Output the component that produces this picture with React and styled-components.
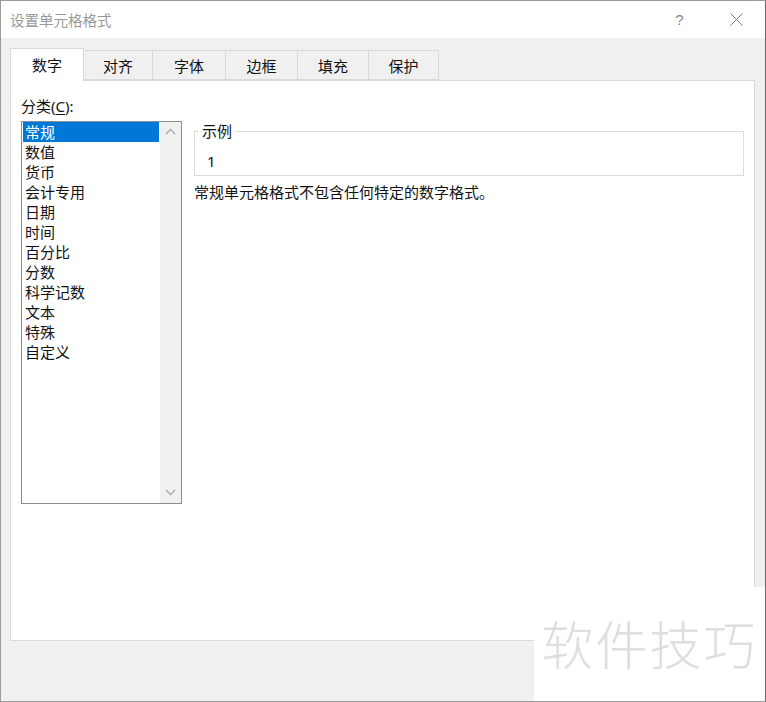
import React from 'react';
import styled, { createGlobalStyle } from 'styled-components';

const GlobalStyle = createGlobalStyle`
  html, body {
    margin: 0;
    padding: 0;
    background: #ffffff;
  }
  body {
    font-family: "Noto Sans", "Noto Sans CJK SC", sans-serif;
    color: #1a1a1a;
  }
`;

const Window = styled.div`
  position: relative;
  box-sizing: border-box;
  width: 766px;
  height: 702px;
  display: flex;
  flex-direction: column;
  background: #f0f0f0;
  border: 1px solid #9c9c9c;
  border-right-color: #5b6b5f;
  overflow: hidden;
`;

const TitleBar = styled.div`
  height: 37px;
  flex-shrink: 0;
  display: flex;
  align-items: center;
  background: #ffffff;
  padding-left: 9px;
`;

const Title = styled.div`
  flex: 1;
  font-size: 14.5px;
  color: #9a9a9a;
  line-height: 20px;
`;

const TitleButton = styled.div`
  width: 57px;
  height: 37px;
  display: flex;
  align-items: center;
  justify-content: center;
  color: #8a8a8a;
  font-size: 15px;
  font-family: "Liberation Sans", sans-serif;
`;

const Content = styled.div`
  flex: 1;
  display: flex;
  flex-direction: column;
  padding: 10px 10px 0 9px;
`;

const TabRow = styled.div`
  display: flex;
  align-items: flex-end;
  height: 32px;
`;

const Tab = styled.div`
  box-sizing: border-box;
  width: ${p => p.$w}px;
  height: ${p => (p.$active ? 33 : 30)}px;
  margin-bottom: ${p => (p.$active ? -1 : 0)}px;
  display: flex;
  align-items: center;
  justify-content: center;
  font-size: 15px;
  color: #111;
  background: ${p => (p.$active ? '#ffffff' : '#f0f0f0')};
  border: 1px solid #d9d9d9;
  border-bottom: ${p => (p.$active ? 'none' : '1px solid #d9d9d9')};
  border-left: ${p => (p.$first || p.$active ? '1px solid #d9d9d9' : 'none')};
  position: relative;
  z-index: ${p => (p.$active ? 1 : 0)};
  padding-bottom: ${p => (p.$active ? 2 : 0)}px;
`;

const Panel = styled.div`
  box-sizing: border-box;
  height: 561px;
  background: #ffffff;
  border: 1px solid #d9d9d9;
  display: flex;
  gap: 12px;
  padding: 15px 10px 0 10px;
`;

const LeftColumn = styled.div`
  display: flex;
  flex-direction: column;
  width: 161px;
`;

const Label = styled.div`
  font-size: 15px;
  line-height: 20px;
  color: #111;
  u {
    text-decoration: underline;
    text-underline-offset: 2px;
  }
`;

const ListBox = styled.div`
  box-sizing: border-box;
  margin-top: 5px;
  height: 383px;
  border: 1px solid #8c8c8c;
  display: flex;
`;

const Items = styled.div`
  flex: 1;
  padding: 0 1px;
  display: flex;
  flex-direction: column;
`;

const Item = styled.div`
  height: 20px;
  line-height: 20px;
  font-size: 15px;
  padding-left: 2px;
  color: ${p => (p.$selected ? '#ffffff' : '#111')};
  background: ${p => (p.$selected ? '#0078d7' : 'transparent')};
`;

const ScrollBar = styled.div`
  width: 21px;
  background: #f0f0f0;
  display: flex;
  flex-direction: column;
  justify-content: space-between;
  align-items: center;
  padding: 6px 0 7px;
`;

const RightColumn = styled.div`
  flex: 1;
  display: flex;
  flex-direction: column;
`;

const Sample = styled.fieldset`
  margin: 25px 0 0 0;
  padding: 10px 12px 4px;
  border: 1px solid #dcdcdc;
  min-width: 0;
`;

const Legend = styled.legend`
  padding: 0 4px;
  margin-left: -9px;
  font-size: 15px;
  line-height: 20px;
  color: #111;
`;

const SampleValue = styled.div`
  font-size: 15px;
  line-height: 20px;
  color: #111;
`;

const Description = styled.div`
  margin-top: 6px;
  font-size: 15px;
  line-height: 20px;
  color: #111;
`;

const Footer = styled.div`
  flex: 1;
`;

const Watermark = styled.div`
  position: absolute;
  right: 0;
  bottom: 0;
  width: 231px;
  height: 114px;
  background: #ffffff;
  display: flex;
  align-items: center;
  justify-content: center;
  padding-bottom: 4px;
  box-sizing: border-box;
  font-family: "Noto Sans CJK SC", sans-serif;
  font-size: 52px;
  letter-spacing: 2px;
  color: #dedede;
  font-weight: 300;
`;

const Chevron = ({ up }) => (
  <svg width="11" height="7" viewBox="0 0 11 7">
    <path
      d={up ? 'M1 6 L5.5 1.5 L10 6' : 'M1 1 L5.5 5.5 L10 1'}
      fill="none"
      stroke="#a6a6a6"
      strokeWidth="1.3"
    />
  </svg>
);

const tabs = [
  { name: '数字', w: 74 },
  { name: '对齐', w: 69 },
  { name: '字体', w: 73 },
  { name: '边框', w: 72 },
  { name: '填充', w: 71 },
  { name: '保护', w: 70 },
];

const categories = ['常规', '数值', '货币', '会计专用', '日期', '时间', '百分比', '分数', '科学记数', '文本', '特殊', '自定义'];

const App = () => {
  return (
    <>
      <GlobalStyle />
      <Window>
        <TitleBar>
          <Title>设置单元格格式</Title>
          <TitleButton>?</TitleButton>
          <TitleButton>
            <svg width="13" height="13" viewBox="0 0 13 13">
              <path d="M0.5 0.5 L12.5 12.5 M12.5 0.5 L0.5 12.5" stroke="#7a7a7a" strokeWidth="1" />
            </svg>
          </TitleButton>
        </TitleBar>
        <Content>
          <TabRow>
            {tabs.map((t, i) => (
              <Tab key={t.name} $w={t.w} $active={i === 0} $first={i === 0}>
                {t.name}
              </Tab>
            ))}
          </TabRow>
          <Panel>
            <LeftColumn>
              <Label>
                分类(<u>C</u>):
              </Label>
              <ListBox>
                <Items>
                  {categories.map((c, i) => (
                    <Item key={c} $selected={i === 0}>
                      {c}
                    </Item>
                  ))}
                </Items>
                <ScrollBar>
                  <Chevron up />
                  <Chevron />
                </ScrollBar>
              </ListBox>
            </LeftColumn>
            <RightColumn>
              <Sample>
                <Legend>示例</Legend>
                <SampleValue>1</SampleValue>
              </Sample>
              <Description>常规单元格格式不包含任何特定的数字格式。</Description>
            </RightColumn>
          </Panel>
          <Footer />
        </Content>
        <Watermark>软件技巧</Watermark>
      </Window>
    </>
  );
};

export default App;
